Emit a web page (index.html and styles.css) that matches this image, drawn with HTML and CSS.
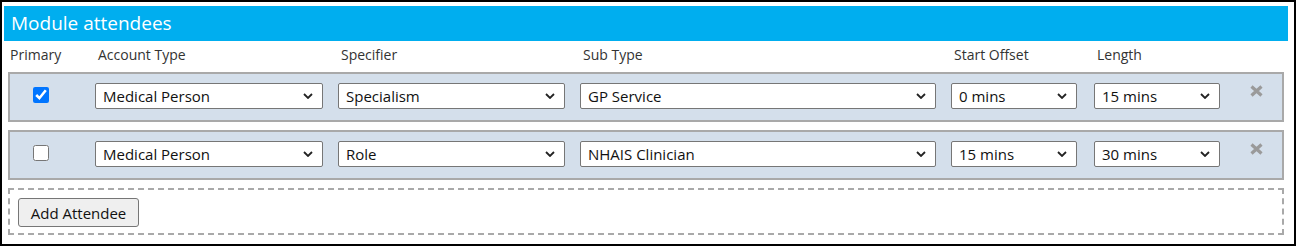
FILE: index.html
```html
<!DOCTYPE html>
<html lang="en">
<head>
    <meta charset="UTF-8">
    <title>Module attendees</title>
    <link rel="stylesheet" href="styles.css">
</head>
<body>

    <div class="frame">
        <div class="panel-title">Module attendees</div>

        <div class="attendees">
            <div class="col-labels">
                <span class="lbl-first">Primary</span>
                <span>Account Type</span>
                <span>Specifier</span>
                <span>Sub Type</span>
                <span>Start Offset</span>
                <span>Length</span>
            </div>

            <div class="attendee-row">
                <div class="cell-check"><input type="checkbox" checked></div>
                <select class="sel"><option>Medical Person</option></select>
                <select class="sel"><option>Specialism</option></select>
                <select class="sel"><option>GP Service</option></select>
                <select class="sel sel-short"><option>0 mins</option></select>
                <select class="sel sel-short"><option>15 mins</option></select>
                <div class="cell-remove">
                    <svg width="13" height="12" viewBox="0 0 13 12"><path d="M1.5 1.5 L11.5 10.5 M11.5 1.5 L1.5 10.5" stroke="#9a9a9a" stroke-width="3.2"/></svg>
                </div>
            </div>

            <div class="attendee-row">
                <div class="cell-check"><input type="checkbox"></div>
                <select class="sel"><option>Medical Person</option></select>
                <select class="sel"><option>Role</option></select>
                <select class="sel"><option>NHAIS Clinician</option></select>
                <select class="sel sel-short"><option>15 mins</option></select>
                <select class="sel sel-short"><option>30 mins</option></select>
                <div class="cell-remove">
                    <svg width="13" height="12" viewBox="0 0 13 12"><path d="M1.5 1.5 L11.5 10.5 M11.5 1.5 L1.5 10.5" stroke="#9a9a9a" stroke-width="3.2"/></svg>
                </div>
            </div>

            <div class="add-box">
                <button class="btn-add">Add Attendee</button>
            </div>
        </div>
    </div>

</body>
</html>
```

FILE: styles.css
```css
body {
    margin: 0;
    padding: 0;
    font-family: "Open Sans", "Noto Sans", sans-serif;
    color: #222;
    background: #fff;
}

.frame {
    width: 1296px;
    height: 246px;
    box-sizing: border-box;
    border: 2px solid #000;
    padding: 4px 6px 9px 2px;
}

.panel-title {
    height: 35px;
    background-color: #00aeef;
    color: #fff;
    font-size: 19px;
    line-height: 35px;
    padding-left: 7px;
}

.attendees {
    margin: 0 4px;
}

/* column headings share the row grid */
.col-labels,
.attendee-row {
    display: grid;
    grid-template-columns: 70px 228px 227px 356px 128px 126px 1fr;
    column-gap: 15px;
}

.col-labels {
    padding: 4px 2px 7px 2px;
    font-size: 14px;
    line-height: 20px;
    color: #333;
}

.col-labels span {
    padding-left: 3px;
}

.col-labels .lbl-first {
    padding-left: 0;
}

.attendee-row {
    height: 46px;
    align-items: center;
    background-color: #d4dfeb;
    border: 2px solid #a9a9a9;
    margin-bottom: 8px;
}

.cell-check {
    padding-left: 23px;
    margin-top: -4px;
    display: flex;
}

.cell-check input {
    width: 16px;
    height: 16px;
    margin: 0;
}

.sel {
    appearance: none;
    -webkit-appearance: none;
    height: 26px;
    margin-top: -2px;
    box-sizing: border-box;
    border: 1px solid #767676;
    border-radius: 2px;
    background: #fff url("data:image/svg+xml;utf8,<svg xmlns='http://www.w3.org/2000/svg' width='10' height='6' viewBox='0 0 10 6'><path d='M1 1 L5 5 L9 1' fill='none' stroke='%23222' stroke-width='1.8'/></svg>") no-repeat right 9px center;
    font-family: inherit;
    font-size: 15px;
    color: #111;
    padding: 0 24px 0 7px;
}

.sel-short {
    width: 126px;
}

.cell-remove {
    align-self: start;
    padding: 11px 0 0 15px;
}

.cell-remove svg {
    display: block;
}

.add-box {
    height: 47px;
    box-sizing: border-box;
    border: 2px dashed #a9a9a9;
    padding: 8px 0 0 8px;
}

.btn-add {
    height: 29px;
    width: 121px;
    box-sizing: border-box;
    background-color: #efefef;
    border: 1px solid #767676;
    border-radius: 3px;
    font-family: inherit;
    font-size: 15px;
    color: #111;
    padding: 0;
}
```
